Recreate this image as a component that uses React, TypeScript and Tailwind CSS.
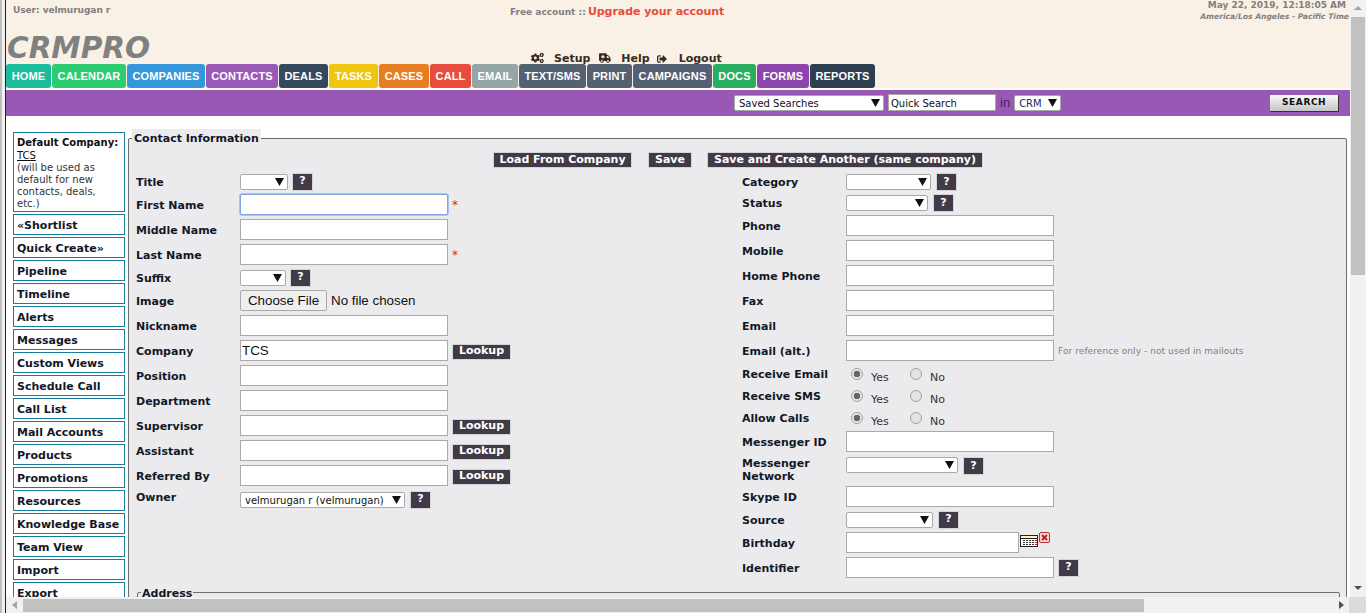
import React from "react";
import { FaCogs, FaAmbulance, FaSignOutAlt } from "react-icons/fa";

const tabs = [
  ["HOME", "w-[45px] bg-[#1abc9c]"],
  ["CALENDAR", "w-[74px] bg-[#2ecc71]"],
  ["COMPANIES", "w-[78px] bg-[#3498db]"],
  ["CONTACTS", "w-[72px] bg-[#9b59b6]"],
  ["DEALS", "w-[49px] bg-[#34495e]"],
  ["TASKS", "w-[49px] bg-[#f1c40f]"],
  ["CASES", "w-[50px] bg-[#e67e22]"],
  ["CALL", "w-[41px] bg-[#e74c3c]"],
  ["EMAIL", "w-[46px] bg-[#95a5a6]"],
  ["TEXT/SMS", "w-[67px] bg-[#536172]"],
  ["PRINT", "w-[45px] bg-[#536172]"],
  ["CAMPAIGNS", "w-[79px] bg-[#536172]"],
  ["DOCS", "w-[43px] bg-[#27ae60]"],
  ["FORMS", "w-[52px] bg-[#8e44ad]"],
  ["REPORTS", "w-[65px] bg-[#2c3e50]"],
];

const side = [
  "«Shortlist", "Quick Create»", "Pipeline", "Timeline", "Alerts", "Messages", "Custom Views",
  "Schedule Call", "Call List", "Mail Accounts", "Products", "Promotions", "Resources",
  "Knowledge Base", "Team View", "Import", "Export",
];

function Arrow() {
  return (
    <svg className="absolute right-[4px] top-1/2 -translate-y-1/2" width="9" height="8" viewBox="0 0 9 8">
      <path d="M0 0h9L4.5 8z" fill="#111" />
    </svg>
  );
}

function Sel({ w, text, color }: { w: string; text?: string; color?: string }) {
  return (
    <div className={`relative h-[16px] shrink-0 ${w}`}>
      <select className={`block h-full w-full appearance-none rounded-[2px] border border-[#a9a9a9] bg-white pl-[4px] pt-[1px] text-[10px] leading-[14px] ${color ?? "text-[#111]"}`}>
        <option>{text ?? ""}</option>
      </select>
      <Arrow />
    </div>
  );
}

function Q({ cls }: { cls?: string }) {
  return (
    <span className={`flex h-[18px] w-[21px] shrink-0 items-center justify-center border border-[#d4d4d4] bg-[#413a47] text-[11px] font-bold text-white ${cls ?? ""}`}>?</span>
  );
}

function Btn({ children, cls }: { children: React.ReactNode; cls: string }) {
  return (
    <span className={`flex h-[16px] shrink-0 items-center justify-center border border-[#d4d4d4] bg-[#413a47] text-[11px] font-bold text-white ${cls}`}>{children}</span>
  );
}

function Inp({ w = "w-[208px]", value, focus }: { w?: string; value?: string; focus?: boolean }) {
  return (
    <input
      readOnly
      value={value ?? ""}
      className={`h-[21px] shrink-0 border bg-white px-[1px] font-['Liberation_Sans',Arial,sans-serif] text-[13.33px] text-[#111] ${w} ${
        focus ? "rounded-[2px] border-[#7da7e6] shadow-[0_0_0_1px_#a9c4ee]" : "border-[#a9a9a9]"
      }`}
    />
  );
}

function Row({ label, h, children, cls, flat }: { label: React.ReactNode; h: string; children?: React.ReactNode; cls?: string; flat?: boolean }) {
  return (
    <div className={`flex items-center ${h} ${cls ?? ""}`}>
      <label className={`w-[104px] shrink-0 text-[11px] font-bold leading-[13px] text-[#111827] ${flat ? "" : "mt-[2px]"}`}>{label}</label>
      {children}
    </div>
  );
}

function Star() {
  return <span className="ml-[4px] text-[12px] text-[#f01818]">*</span>;
}

function Lookup() {
  return <Btn cls="ml-[4px] mt-[2px] w-[59px]">Lookup</Btn>;
}

function Radios({ name }: { name: string }) {
  const radio =
    "m-0 h-[12px] w-[12px] appearance-none rounded-full border border-[#a3a3a3] bg-[#e4e4e4] checked:bg-[radial-gradient(circle,#666_3px,#e4e4e4_3.5px)]";
  return (
    <div className="flex items-center pl-[5px] text-[11px] text-[#333]">
      <input type="radio" readOnly defaultChecked name={name} className={radio} />
      <span className="ml-[8px] mt-[8px] w-[39px]">Yes</span>
      <input type="radio" readOnly name={name} className={radio} />
      <span className="ml-[8px] mt-[8px]">No</span>
    </div>
  );
}

function CalendarIcon() {
  return (
    <svg width="18" height="12" viewBox="0 0 18 12" className="-mt-[4px] ml-[1px] shrink-0">
      <rect x="0.5" y="0.5" width="17" height="11" fill="#fff" stroke="#222" />
      <rect x="1" y="1" width="16" height="2.5" fill="#fdf6b0" />
      <path d="M1 3.5h16" stroke="#222" />
      <path d="M3 5.5h2M6 5.5h2M9 5.5h2M12 5.5h2M3 7.5h2M6 7.5h2M9 7.5h2M12 7.5h2M3 9.5h2M6 9.5h2M9 9.5h2M12 9.5h2" stroke="#333" />
      <path d="M15 5.5h2M15 7.5h2M15 9.5h2" stroke="#d22" />
    </svg>
  );
}

function ClearIcon() {
  return (
    <svg width="11" height="11" viewBox="0 0 11 11" className="-mt-[10px] ml-[1px] shrink-0">
      <rect x="0.5" y="0.5" width="10" height="10" rx="1.5" fill="#f4dcdc" stroke="#b3312f" />
      <path d="M3 3l5 5M8 3l-5 5" stroke="#c0201e" strokeWidth="2" />
    </svg>
  );
}

export default function App() {
  return (
    <div className="flex h-[613px] w-[1366px] overflow-hidden bg-white font-['DejaVu_Sans',Verdana,sans-serif]">
      <div className="w-[6px] shrink-0 border-r border-l-2 border-r-[#222] border-l-[#bfbfbf] bg-[#f0f0f0]" />
      <div className="flex min-w-0 flex-1 flex-col">
        <div className="flex h-[597px] min-h-0">
          <main className="w-[1344px] overflow-hidden">
            <header className="h-[88px] bg-[#f9f1e6]">
              <div className="flex h-[35px]">
                <div className="w-[504px] pl-[7px] pt-[4px] text-[9px] font-bold leading-[13px] tracking-[-0.05px] text-[#808080]">User: velmurugan r</div>
                <div className="flex-1 pt-[5px] text-[9px] font-bold leading-[14px] text-[#808080]">
                  Free account :: <a className="-ml-[1px] text-[11px] tracking-[-0.05px] text-[#e74c3c]">Upgrade your account</a>
                </div>
                <div className="text-right font-bold italic leading-[11px] text-[#808080]">
                  <div className="pr-[4px] text-[9px] not-italic">May 22, 2019, 12:18:05 AM</div>
                  <div className="pr-[1px] text-[7.6px]">America/Los Angeles - Pacific Time</div>
                </div>
              </div>
              <div className="flex h-[29px]">
                <div className="w-[525px] pl-[1px] text-[29.5px] font-bold italic leading-[26px] text-[#808080]">CRMPRO</div>
                <nav className="-mb-[1px] flex items-end text-[11px] font-bold leading-[13px] text-[#3a2a20]">
                  <FaCogs className="mb-[1px] h-[12px] w-[13px]" />
                  <span className="ml-[10px]">Setup</span>
                  <FaAmbulance className="mb-[1px] ml-[9px] h-[12px] w-[12px]" />
                  <span className="ml-[10px]">Help</span>
                  <FaSignOutAlt className="mb-[1px] ml-[7px] h-[10px] w-[10px]" />
                  <span className="ml-[12px]">Logout</span>
                </nav>
              </div>
              <div className="flex h-[24px] gap-[1px]">
                {tabs.map(([t, c]) => (
                  <a key={t} className={`flex h-[24px] items-center justify-center rounded-[3px] font-['Liberation_Sans',Arial,sans-serif] text-[11px] font-bold tracking-[0.15px] text-white ${c}`}>{t}</a>
                ))}
              </div>
            </header>
            <div className="mt-[2px] flex h-[26px] items-center bg-[#9858b3] pb-[1px]">
              <div className="ml-[728px]"><Sel w="w-[150px]" text="Saved Searches" /></div>
              <input readOnly value="Quick Search" className="ml-[4px] h-[17px] w-[108px] border border-[#a9a9a9] bg-white px-[2px] pt-[1px] text-[10px] text-[#111]" />
              <span className="ml-[4px] font-['Liberation_Sans',Arial,sans-serif] text-[13px] text-[#4a2065]">in</span>
              <div className="ml-[4px]"><Sel w="w-[47px]" text="CRM" color="text-[#1a2a6a]" /></div>
              <button className="ml-[209px] mt-[1px] h-[17px] w-[69px] border-r border-b border-r-[#333] border-b-[#333] bg-gradient-to-b from-[#fafafa] to-[#c4c4c4] pt-[1px] text-[9px] font-bold tracking-[0.6px] text-[#111]">SEARCH</button>
            </div>
            <div className="flex">
              <aside className="ml-[7px] mt-[16px] flex w-[112px] shrink-0 flex-col gap-[2px]">
                <div className="h-[80px] border border-[#167ca3] px-[3px] pt-[5px] text-[10px] leading-[12px] text-[#333]">
                  <b className="-mt-[1px] mb-[1px] block text-[#111]">Default Company:</b>
                  <a className="text-[#111] underline">TCS</a>
                  <br />
                  (will be used as default for new contacts, deals, etc.)
                </div>
                {side.map((s) => (
                  <div key={s} className="flex h-[21px] shrink-0 items-center border border-[#167ca3] px-[3px] pt-[4px] text-[11px] font-bold text-[#111827]">{s}</div>
                ))}
              </aside>
              <fieldset className="ml-[3px] mr-[3px] mt-[13px] min-w-0 flex-1 rounded-[2px] border border-[#6f6f6f] bg-[#ebebed]">
                <legend className="ml-[3px] h-[18px] bg-[#ebebed] px-[2px] text-[11px] font-bold leading-[20px] text-[#111827]">Contact Information</legend>
                <div className="ml-[364px] mt-[5px] flex">
                  <Btn cls="w-[139px]">Load From Company</Btn>
                  <Btn cls="ml-[16px] w-[44px]">Save</Btn>
                  <Btn cls="ml-[15px] w-[276px]">Save and Create Another (same company)</Btn>
                </div>
                <div className="ml-[7px] mt-[3px] flex">
                  <div className="w-[606px] shrink-0">
                    <Row label="Title" h="h-[21px]"><Sel w="w-[48px]" /><Q cls="ml-[4px]" /></Row>
                    <Row label="First Name" h="h-[25px]"><Inp focus /><Star /></Row>
                    <Row label="Middle Name" h="h-[25px]"><Inp /></Row>
                    <Row label="Last Name" h="h-[25px]"><Inp /><Star /></Row>
                    <Row label="Suffix" h="h-[21px]"><Sel w="w-[46px]" /><Q cls="ml-[4px]" /></Row>
                    <Row label="Image" h="h-[25px]">
                      <input type="file" className="h-[21px] w-[220px] font-['Liberation_Sans',Arial,sans-serif] text-[13.33px] text-[#111] file:mr-[4px] file:h-[21px] file:w-[87px] file:rounded-[2px] file:border file:border-[#a9a9a9] file:bg-[#efefef] file:text-[13.33px] file:text-[#111]" />
                    </Row>
                    <Row label="Nickname" h="h-[25px]"><Inp /></Row>
                    <Row label="Company" h="h-[25px]"><Inp value="TCS" /><Lookup /></Row>
                    <Row label="Position" h="h-[25px]"><Inp /></Row>
                    <Row label="Department" h="h-[25px]"><Inp /></Row>
                    <Row label="Supervisor" h="h-[25px]"><Inp /><Lookup /></Row>
                    <Row label="Assistant" h="h-[25px]"><Inp /><Lookup /></Row>
                    <Row label="Referred By" h="h-[25px]"><Inp /><Lookup /></Row>
                    <div className="flex h-[23px] items-center">
                      <label className="-mt-[5px] w-[104px] shrink-0 text-[11px] font-bold leading-[13px] text-[#111827]">Owner</label>
                      <Sel w="w-[165px]" text="velmurugan r (velmurugan)" />
                      <Q cls="ml-[5px]" />
                    </div>
                  </div>
                  <div className="min-w-0 flex-1">
                    <Row flat label="Category" h="h-[22px]"><Sel w="w-[85px]" /><Q cls="ml-[5px]" /></Row>
                    <Row flat label="Status" h="h-[20px]"><Sel w="w-[82px]" /><Q cls="ml-[5px]" /></Row>
                    <Row label="Phone" h="h-[25px]"><Inp /></Row>
                    <Row label="Mobile" h="h-[25px]"><Inp /></Row>
                    <Row label="Home Phone" h="h-[25px]"><Inp /></Row>
                    <Row label="Fax" h="h-[25px]"><Inp /></Row>
                    <Row label="Email" h="h-[25px]"><Inp /></Row>
                    <Row label="Email (alt.)" h="h-[25px]"><Inp /><span className="ml-[4px] mt-[3px] text-[9px] tracking-[0.07px] text-[#808080]">For reference only - not used in mailouts</span></Row>
                    <Row flat label="Receive Email" h="h-[22px]"><Radios name="re" /></Row>
                    <Row flat label="Receive SMS" h="h-[22px]"><Radios name="rs" /></Row>
                    <Row flat label="Allow Calls" h="h-[22px]"><Radios name="ac" /></Row>
                    <Row label="Messenger ID" h="h-[25px]"><Inp /></Row>
                    <Row flat label={<>Messenger<br />Network</>} h="h-[30px]" cls="!items-start pt-[3px]"><Sel w="w-[112px]" /><Q cls="ml-[5px]" /></Row>
                    <Row label="Skype ID" h="h-[25px]"><Inp /></Row>
                    <Row label="Source" h="h-[21px]"><Sel w="w-[87px]" /><Q cls="ml-[5px]" /></Row>
                    <Row label="Birthday" h="h-[25px]"><Inp w="w-[173px]" /><CalendarIcon /><ClearIcon /></Row>
                    <Row label="Identifier" h="h-[25px]"><Inp /><Q cls="ml-[4px]" /></Row>
                  </div>
                </div>
                <fieldset className="ml-[8px] mr-[6px] mt-[3px] h-[200px] rounded-[2px] border border-[#6f6f6f]">
                  <legend className="ml-[3px] h-[18px] px-[1px] text-[11px] font-bold leading-[22px] text-[#111827]">Address</legend>
                </fieldset>
              </fieldset>
            </div>
          </main>
          <div className="relative w-[16px] shrink-0 bg-[#f1f1f1]">
            <svg className="absolute left-[4px] top-[6px]" width="8" height="4" viewBox="0 0 8 4"><path d="M4 0l4 4H0z" fill="#a3a3a3" /></svg>
            <div className="ml-[1px] mt-[17px] h-[258px] w-[14px] bg-[#c1c1c1]" />
            <svg className="absolute bottom-[7px] left-[4px]" width="8" height="4" viewBox="0 0 8 4"><path d="M0 0h8L4 4z" fill="#505050" /></svg>
          </div>
        </div>
        <div className="flex h-[16px] shrink-0 items-center bg-[#f1f1f1]">
          <svg className="ml-[6px] shrink-0" width="5" height="8" viewBox="0 0 5 8"><path d="M5 0v8L0 4z" fill="#a3a3a3" /></svg>
          <div className="ml-[6px] h-[13px] w-[1121px] shrink-0 bg-[#c1c1c1]" />
          <svg className="ml-[195px] shrink-0" width="5" height="8" viewBox="0 0 5 8"><path d="M0 0v8l5-4z" fill="#505050" /></svg>
          <div className="ml-auto h-full w-[17px] bg-[#dcdcdc]" />
        </div>
      </div>
    </div>
  );
}
